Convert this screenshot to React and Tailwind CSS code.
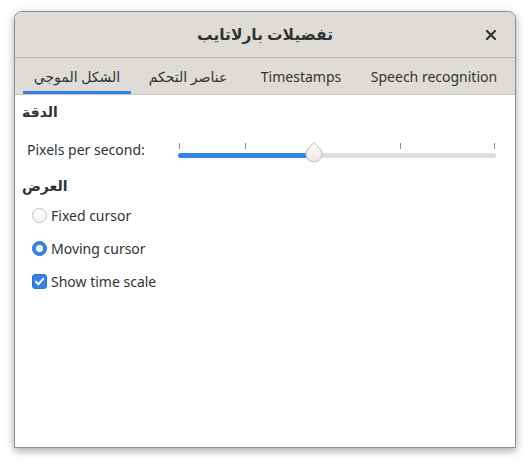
import React from "react";

const font = { fontFamily: '"Noto Sans", "DejaVu Sans", sans-serif' };

function Knob() {
  return (
    <svg width="20" height="24" viewBox="0 0 20 24" className="absolute left-[126px] top-[-12px]">
      <defs>
        <linearGradient id="kg" x1="0" y1="0" x2="0" y2="1">
          <stop offset="0" stopColor="#fbfbfa" />
          <stop offset="1" stopColor="#ebe9e6" />
        </linearGradient>
      </defs>
      <path d="M10 1.5 L17 9 A8 8 0 1 1 3 9 Z" fill="url(#kg)" stroke="#c0bbb4" strokeWidth="1" strokeLinejoin="round" />
    </svg>
  );
}

export default function App() {
  return (
    <div className="w-[530px] h-[465px] bg-white text-[#2e3436] pt-[11px] pl-[14px]" style={font}>
      <div className="w-[502px] h-[437px] flex flex-col rounded-t-[8px] border border-[#8d8d8b] bg-white shadow-[0_3px_9px_rgba(0,0,0,0.35)] overflow-hidden">
        <div className="h-[46px] shrink-0 bg-[#dfdcd8] border-b border-[#bab5ab] flex items-center relative">
          <div className="w-full text-center font-bold text-[15.5px]" dir="rtl">تفضيلات بارلاتايب</div>
          <div className="absolute right-[19px] top-[12px]">
            <svg width="10" height="10" viewBox="0 0 10 10" className="mt-[6px]">
              <path d="M1 1 L9 9 M9 1 L1 9" stroke="#2e3436" strokeWidth="2.2" strokeLinecap="square" />
            </svg>
          </div>
        </div>
        <div className="h-[37px] shrink-0 bg-[#dfdcd8] border-b border-[#cdc7c2] flex items-stretch text-[14px] pl-[8px]">
          <div className="w-[108px] flex items-center justify-center relative border-b-[3px] border-[#3584e4] pt-[4px]" dir="rtl">الشكل الموجي</div>
          <div className="w-[114px] flex items-center justify-center pt-[1px]" dir="rtl">عناصر التحكم</div>
          <div className="w-[112px] flex items-center justify-center pt-[1px]">Timestamps</div>
          <div className="w-[154px] flex items-center justify-center pt-[1px]">Speech recognition</div>
        </div>
        <div className="flex-1 bg-white px-[7px] pt-[6px] text-[14px]">
          <div className="font-bold h-[22px] leading-[22px] w-fit" dir="rtl">الدقة</div>
          <div className="flex items-center h-[38px] mt-[10px]">
            <div className="ml-[5px] w-[151px] pb-[5px]">Pixels per second:</div>
            <div className="relative w-[318px] h-[38px]">
              <div className="absolute left-[1px] top-[10px] w-px h-[6px] bg-[#8a8a88]" />
              <div className="absolute left-[67px] top-[10px] w-px h-[6px] bg-[#8a8a88]" />
              <div className="absolute left-[222px] top-[10px] w-px h-[6px] bg-[#8a8a88]" />
              <div className="absolute left-[316px] top-[10px] w-px h-[6px] bg-[#8a8a88]" />
              <div className="absolute left-0 top-[20px] w-[318px] h-[5px] rounded-full bg-[#e1dedb]">
                <div className="h-full w-[132px] rounded-full bg-[#3584e4]" />
                <Knob />
              </div>
            </div>
          </div>
          <div className="font-bold h-[22px] leading-[22px] mt-[4px] w-fit" dir="rtl">العرض</div>
          <div className="flex flex-col pl-[10px] mt-[2px]">
            <div className="flex items-center h-[33px]">
              <div className="w-[15px] h-[15px] rounded-full border border-[#c6c1bb] bg-gradient-to-b from-white to-[#f4f3f2]" />
              <span className="ml-[4px]">Fixed cursor</span>
            </div>
            <div className="flex items-center h-[33px]">
              <div className="w-[15px] h-[15px] rounded-full bg-[#3584e4] flex items-center justify-center border border-[#2f73c7]">
                <div className="w-[7px] h-[7px] rounded-full bg-white" />
              </div>
              <span className="ml-[4px]">Moving cursor</span>
            </div>
            <div className="flex items-center h-[33px]">
              <div className="w-[15px] h-[15px] rounded-[3px] bg-[#3584e4] border border-[#2f73c7] flex items-center justify-center">
                <svg width="11" height="11" viewBox="0 0 11 11">
                  <path d="M2 5.8 L4.5 8.2 L9.2 2.8" stroke="white" strokeWidth="2" fill="none" strokeLinecap="round" strokeLinejoin="round" />
                </svg>
              </div>
              <span className="ml-[4px]">Show time scale</span>
            </div>
          </div>
        </div>
      </div>
    </div>
  );
}
